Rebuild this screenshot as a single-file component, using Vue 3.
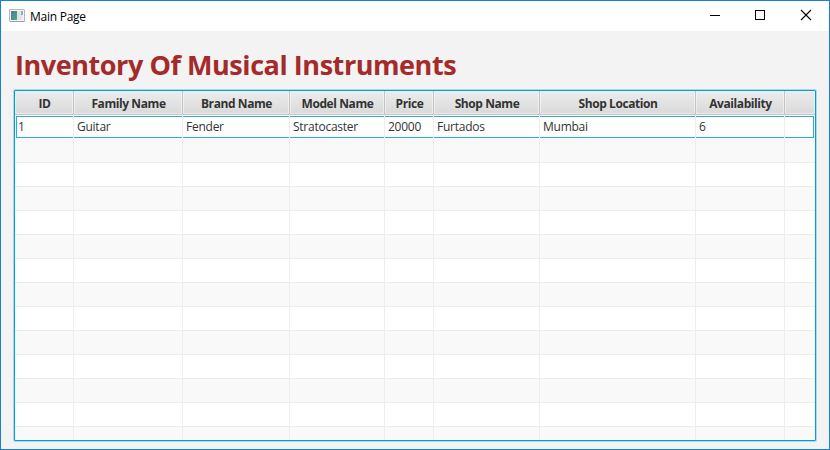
<script setup>
const columns = [
  { title: 'ID', value: '1', width: 59 },
  { title: 'Family Name', value: 'Guitar', width: 109 },
  { title: 'Brand Name', value: 'Fender', width: 107 },
  { title: 'Model Name', value: 'Stratocaster', width: 95 },
  { title: 'Price', value: '20000', width: 49 },
  { title: 'Shop Name', value: 'Furtados', width: 106 },
  { title: 'Shop Location', value: 'Mumbai', width: 156 },
  { title: 'Availability', value: '6', width: 89 },
  { title: '', value: '', width: 30 },
]
const tracks = { gridTemplateColumns: columns.map((c) => c.width + 'px').join(' ') }
const emptyRows = 13
</script>

<template>
  <div class="window">
    <header class="titlebar">
      <svg class="app-icon" width="16" height="14" viewBox="0 0 16 14">
        <defs>
          <linearGradient id="pane" x1="0" y1="0" x2="1" y2="1">
            <stop offset="0" stop-color="#4b78a8" />
            <stop offset="1" stop-color="#51a878" />
          </linearGradient>
        </defs>
        <rect x="0.5" y="0.5" width="15" height="12" rx="0.5" fill="#f4f5f7" stroke="#b3b6ba" />
        <rect x="1" y="12" width="14" height="1" fill="#9b9fa4" />
        <rect x="2" y="2" width="6" height="9" fill="url(#pane)" />
        <rect x="8" y="2" width="4" height="9" fill="#dfe3e8" />
        <rect x="12" y="2" width="2" height="4" fill="#86b7a6" />
        <rect x="12" y="6" width="2" height="5" fill="#e3e7ea" />
      </svg>
      <span class="caption">Main Page</span>
      <div class="controls">
        <svg width="46" height="30" viewBox="0 0 46 30"><path d="M18 14.5H28" stroke="#000" /></svg>
        <svg width="46" height="30" viewBox="0 0 46 30"><rect x="17.5" y="9.5" width="9" height="9" fill="none" stroke="#000" /></svg>
        <svg width="46" height="30" viewBox="0 0 46 30"><path d="M17 9L27 19M27 9L17 19" stroke="#000" stroke-width="1.1" /></svg>
      </div>
    </header>
    <main class="content">
      <h1>Inventory Of Musical Instruments</h1>
      <div class="table">
        <div class="head" :style="tracks">
          <div v-for="(c, i) in columns" :key="i" class="th"><span>{{ c.title }}</span></div>
        </div>
        <div class="row selected" :style="tracks">
          <div v-for="(c, i) in columns" :key="i" class="td"><span>{{ c.value }}</span></div>
        </div>
        <div v-for="n in emptyRows" :key="n" class="row" :class="{ odd: n % 2 === 1 }" :style="tracks">
          <div v-for="(c, i) in columns" :key="i" class="td"></div>
        </div>
      </div>
    </main>
  </div>
</template>

<style>
body {
  overflow: hidden;
}
</style>

<style scoped>
.window {
  box-sizing: border-box;
  width: 830px;
  height: 450px;
  border: 1px solid #1b7fd4;
  background: #f3f3f3;
  font-family: 'Open Sans', 'Noto Sans', sans-serif;
  font-size: 12px;
  overflow: hidden;
}
.titlebar {
  display: flex;
  height: 30px;
  background: #fff;
  align-items: center;
}
.app-icon {
  margin-left: 8px;
}
.caption {
  margin-left: 5px;
  color: #000;
  letter-spacing: -0.25px;
}
.controls {
  display: flex;
  margin-left: auto;
  margin-right: -1px;
}
.content {
  padding: 0 13px;
}
h1 {
  margin: 0;
  padding: 14px 0 0 1px;
  height: 45px;
  line-height: 40px;
  font-size: 27px;
  font-weight: 700;
  letter-spacing: -0.44px;
  color: #a52a2a;
  white-space: nowrap;
}
.table {
  box-sizing: border-box;
  width: 802px;
  height: 351px;
  border: 1px solid #039ed3;
  box-shadow: 0 0 0 1px #a8dced;
  border-radius: 1px;
  background: #fff;
  overflow: hidden;
}
.head {
  display: grid;
  height: 24px;
}
.th {
  box-sizing: border-box;
  display: flex;
  align-items: center;
  justify-content: center;
  padding: 2px 0 0 1px;
  border-right: 1px solid #c3c3c3;
  border-bottom: 1px solid #c3c3c3;
  background: linear-gradient(#ececec, #d9d9d9);
  box-shadow: inset 0 0 0 1px rgba(255, 255, 255, 0.45);
  color: #333;
  font-weight: 700;
  letter-spacing: -0.42px;
  white-space: nowrap;
}
.th:last-child {
  border-right: 0;
}
.row {
  position: relative;
  display: grid;
  box-sizing: border-box;
  height: 24px;
  border-bottom: 1px solid #ededed;
}
.odd {
  background: #f9f9f9;
}
.td {
  position: relative;
  z-index: 1;
  box-sizing: border-box;
  padding-left: 3px;
  border-right: 1px solid #ededed;
  line-height: 23px;
  color: #333;
  letter-spacing: -0.25px;
  white-space: nowrap;
}
.td:last-child {
  border-right: 0;
}
.selected {
  border-bottom-color: #f9f9f9;
}
.selected::before {
  content: '';
  position: absolute;
  inset: 1px 1px 0;
  border: 1px solid #30a9d4;
}
</style>
